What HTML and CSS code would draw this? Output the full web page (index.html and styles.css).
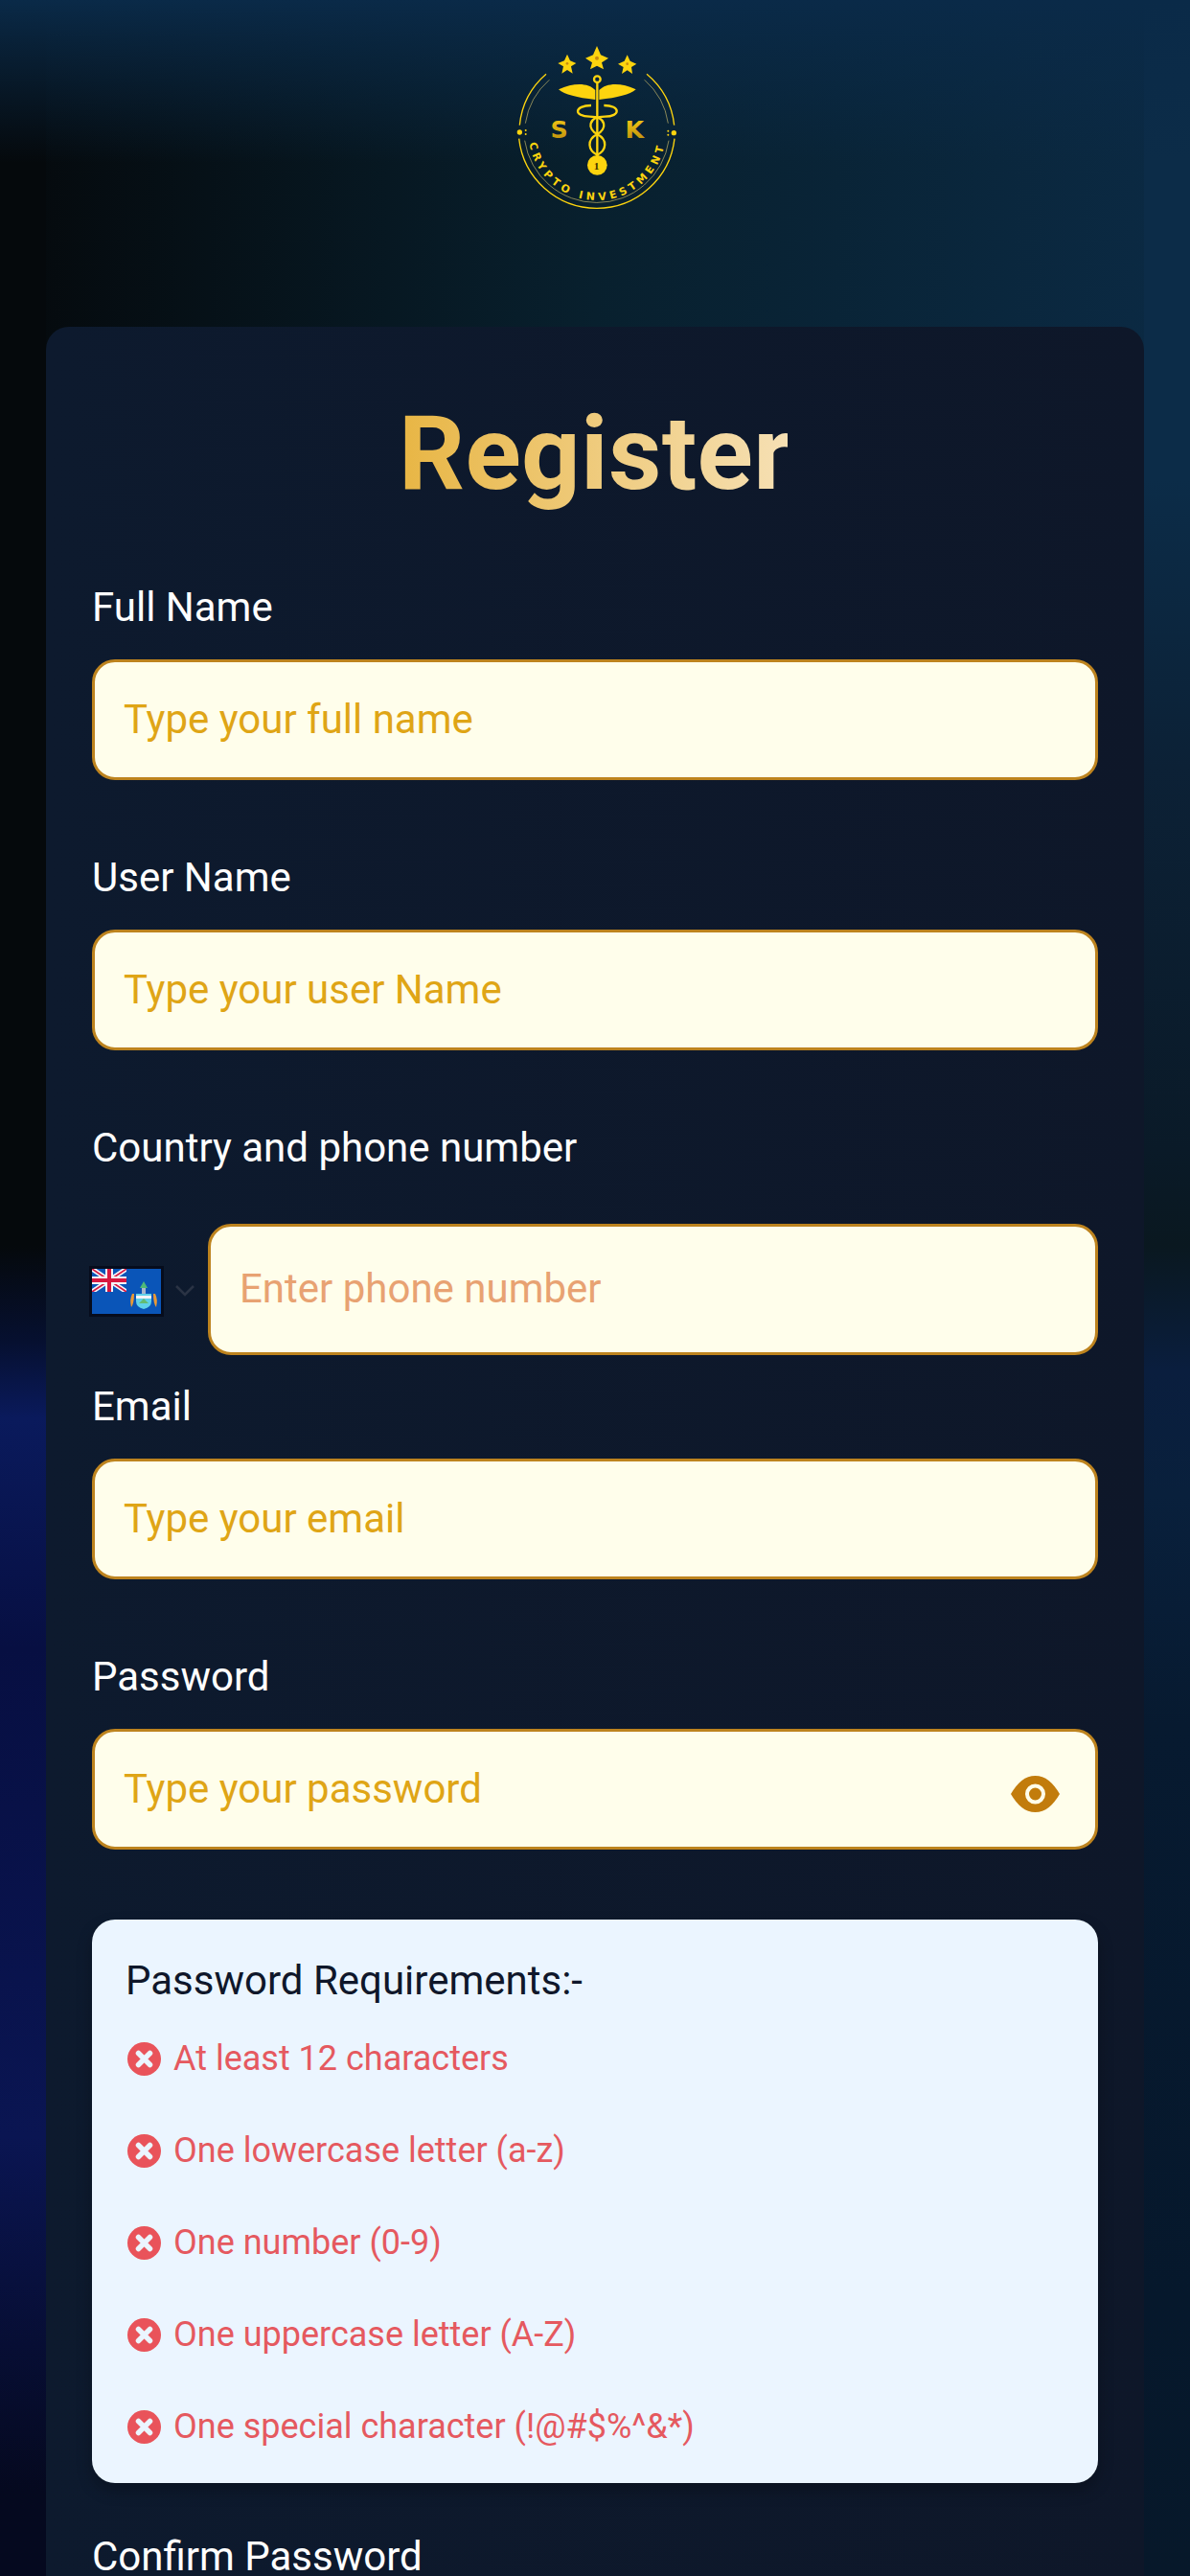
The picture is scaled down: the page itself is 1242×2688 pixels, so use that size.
FILE: index.html

```html
<!DOCTYPE html>
<html lang="en">
<head>
  <meta charset="UTF-8">
  <meta name="viewport" content="width=device-width, initial-scale=1.0">
  <title>Register</title>
  <link rel="stylesheet" href="styles.css">
</head>
<body>
  <div class="page">
    <div class="header">
      <svg class="logo" viewBox="0 0 720 660">
        <defs>
          <path id="logoArc" d="M148 352 A215 215 0 0 0 578 352"/>
          <linearGradient id="logoLetter" x1="0" y1="0" x2="0" y2="1">
            <stop offset="0" stop-color="#fbd016"/>
            <stop offset="1" stop-color="#b98a0c"/>
          </linearGradient>
        </defs>
        <g fill="#fdd40e">
          <polygon points="363,84 375,112 399,122 378,136 384,157 363,146 342,157 348,136 327,122 351,112"/>
          <polygon points="270,110 279,130 298,138 282,148 287,170 270,159 253,170 258,148 241,138 261,130"/>
          <polygon points="458,112 467,131 487,140 471,150 474,171 458,160 441,171 446,150 429,140 449,131"/>
        </g>
        <g fill="#c98a10">
          <circle cx="363" cy="122" r="6"/>
          <circle cx="270" cy="139" r="4"/>
          <circle cx="458" cy="140" r="4"/>
        </g>
        <g fill="none" stroke="#fdd40e" stroke-width="4">
          <path d="M121 332 A243 243 0 0 1 204 172"/>
          <path d="M519 172 A243 243 0 0 1 605 332"/>
          <path d="M119 374 A245 245 0 0 0 606 374"/>
        </g>
        <g fill="none" stroke="#c9b96a" stroke-width="2">
          <path d="M139 326 A225 225 0 0 1 214 190"/>
          <path d="M512 190 A225 225 0 0 1 586 326"/>
          <path d="M137 380 A228 228 0 0 0 588 380"/>
        </g>
        <g fill="#fdd40e">
          <circle cx="121" cy="354" r="8"/>
          <circle cx="140" cy="348" r="3"/>
          <circle cx="140" cy="360" r="3"/>
          <circle cx="604" cy="356" r="8"/>
          <circle cx="586" cy="350" r="3"/>
          <circle cx="586" cy="362" r="3"/>
          <path d="M358 222 C335 198 290 198 243 220 C262 236 300 246 358 252 Z"/>
          <path d="M370 222 C393 198 440 198 485 220 C466 236 428 246 370 252 Z"/>
          <circle cx="364" cy="457" r="31"/>
        </g>
        <g fill="none" stroke="#fdd40e" stroke-width="7">
          <circle cx="364" cy="188" r="10"/>
          <path d="M364 198 V430"/>
          <path d="M345 270 C290 270 290 305 340 305 C395 305 395 345 364 360 C330 378 335 410 364 425 C393 410 398 378 364 360 C333 345 333 305 388 305 C438 305 438 270 385 270"/>
        </g>
        <text class="logo-letter" x="245" y="371">S</text>
        <text class="logo-letter" x="481" y="371">K</text>
        <text class="logo-coin" x="362" y="470">1</text>
        <text class="logo-ring">
          <textPath href="#logoArc" startOffset="50%" text-anchor="middle">CRYPTO INVESTMENT</textPath>
        </text>
      </svg>
    </div>

    <form class="card">
      <h1 class="title">Register</h1>

      <div class="field">
        <label class="label">Full Name</label>
        <input class="input" type="text" placeholder="Type your full name">
      </div>

      <div class="field">
        <label class="label">User Name</label>
        <input class="input" type="text" placeholder="Type your user Name">
      </div>

      <div class="field field-phone">
        <label class="label">Country and phone number</label>
        <div class="phone-row">
          <div class="country">
            <svg class="flag" viewBox="0 0 72 47">
              <rect width="72" height="47" fill="#0a55b8"/>
              <path d="M0 0 L36 24 M36 0 L0 24" stroke="#f4f4f8" stroke-width="5"/>
              <path d="M0 0 L36 24 M36 0 L0 24" stroke="#d8173f" stroke-width="1.600"/>
              <rect y="24" width="36" height="3" fill="#0a55b8"/>
              <rect x="36" width="3" height="24" fill="#0a55b8"/>
              <rect x="14" width="8" height="24" fill="#f4f4f8"/>
              <rect y="8" width="36" height="8" fill="#f4f4f8"/>
              <rect x="16" width="4" height="24" fill="#d8173f"/>
              <rect y="10" width="36" height="4" fill="#d8173f"/>
              <path d="M54 13 L58 20 H50 Z" fill="#4fb878"/>
              <rect x="52" y="20" width="4" height="6" fill="#a9b6cc"/>
              <path d="M46 26 H62 V34 Q62 40 54 42 Q46 40 46 34 Z" fill="#5fd0ea"/>
              <path d="M46 28 H62 V31 H46 Z" fill="#f4f4f8"/>
              <path d="M49 36 L54 31 L59 36 Z" fill="#63bb72"/>
              <path d="M42 26 Q39 32 41 40 Q44 36 44 26 Z" fill="#eb9a34"/>
              <path d="M66 26 Q69 32 67 40 Q64 36 64 26 Z" fill="#eb9a34"/>
            </svg>
            <svg class="chevron" viewBox="0 0 20 12">
              <path d="M1 1 L10 10 L19 1" fill="none" stroke="#2a3344" stroke-width="2.6"/>
            </svg>
          </div>
          <input class="input input-phone" type="tel" placeholder="Enter phone number">
        </div>
      </div>

      <div class="field">
        <label class="label">Email</label>
        <input class="input" type="email" placeholder="Type your email">
      </div>

      <div class="field">
        <label class="label">Password</label>
        <div class="password-wrap">
          <input class="input" type="password" placeholder="Type your password">
          <svg class="eye" viewBox="0 0 51 38">
            <path d="M0 19 C7 7 15 0 25.500 0 C36 0 44 7 51 19 C44 31 36 38 25.500 38 C15 38 7 31 0 19 Z" fill="#c27c0c"/>
            <circle cx="25.500" cy="19" r="8.500" fill="none" stroke="#fffeeb" stroke-width="4"/>
          </svg>
        </div>
      </div>

      <div class="requirements">
        <p class="req-title">Password Requirements:-</p>
        <ul class="req-list">
          <li class="req-item"><svg class="req-icon" viewBox="0 0 35 35"><circle cx="17.500" cy="17.500" r="17.500"/><path d="M11.500 11.500 L23.500 23.500 M23.500 11.500 L11.500 23.500"/></svg>At least 12 characters</li>
          <li class="req-item"><svg class="req-icon" viewBox="0 0 35 35"><circle cx="17.500" cy="17.500" r="17.500"/><path d="M11.500 11.500 L23.500 23.500 M23.500 11.500 L11.500 23.500"/></svg>One lowercase letter (a-z)</li>
          <li class="req-item"><svg class="req-icon" viewBox="0 0 35 35"><circle cx="17.500" cy="17.500" r="17.500"/><path d="M11.500 11.500 L23.500 23.500 M23.500 11.500 L11.500 23.500"/></svg>One number (0-9)</li>
          <li class="req-item"><svg class="req-icon" viewBox="0 0 35 35"><circle cx="17.500" cy="17.500" r="17.500"/><path d="M11.500 11.500 L23.500 23.500 M23.500 11.500 L11.500 23.500"/></svg>One uppercase letter (A-Z)</li>
          <li class="req-item"><svg class="req-icon" viewBox="0 0 35 35"><circle cx="17.500" cy="17.500" r="17.500"/><path d="M11.500 11.500 L23.500 23.500 M23.500 11.500 L11.500 23.500"/></svg>One special character (!@#$%^&amp;*)</li>
        </ul>
      </div>

      <div class="field field-confirm">
        <label class="label">Confirm Password</label>
      </div>
    </form>
  </div>
</body>
</html>
```

FILE: styles.css

```css
* {
  box-sizing: border-box;
}
html, body {
  margin: 0;
  padding: 0;
  height: 2688px;
  overflow: hidden;
}
body {
  font-family: Roboto, "Liberation Sans", sans-serif;
  color: white;
  background: #050d18;
}
.page {
  height: 2688px;
  overflow: hidden;
  display: flex;
  flex-direction: column;
  background:
    linear-gradient(to bottom, #0a2a48 0, rgba(10, 42, 72, 0.75) 40px, rgba(10, 42, 72, 0) 170px),
    linear-gradient(to bottom, #05090c 0, #05090c 1300px, #061030 1400px, #0a1a5c 1480px, #070f42 1720px, #0a1552 2230px, #05091f 2600px) left top / 48px 100% no-repeat,
    linear-gradient(to bottom, #0c2c48 0, #0c2c48 500px, #0c2136 800px, #0a1a28 1200px, #0a1820 1300px, #0a1e3e 1430px, #09203c 1560px, #071a30 1800px, #06182c 2400px, #07182a 2688px) right top / 48px 100% no-repeat,
    linear-gradient(to right, #05090c 0, #08202e 50%, #0b2a44 100%) top / 100% 400px no-repeat;
}
.header {
  height: 341px;
  flex-shrink: 0;
  display: flex;
  justify-content: center;
  padding-top: 20px;
}
.logo {
  width: 240px;
  height: 220px;
  margin-left: 1px;
}
.logo-letter {
  font: 700 76px "DejaVu Sans", sans-serif;
  fill: url(#logoLetter);
  text-anchor: middle;
}
.logo-coin {
  font: 700 34px "Liberation Serif", serif;
  fill: #3a3000;
  text-anchor: middle;
}
.logo-ring {
  font: 700 33px "DejaVu Sans", sans-serif;
  fill: #fdd40e;
  letter-spacing: 12px;
}
.card {
  flex: 1;
  margin: 0 48px;
  padding: 67px 48px 0;
  background: linear-gradient(90deg, #0d1a2e, #0e1729);
  border-radius: 24px 24px 0 0;
}
.title {
  margin: 0 0 71px;
  font-size: 108px;
  line-height: 130px;
  font-weight: 700;
  letter-spacing: 0.3px;
  text-align: center;
  background: linear-gradient(90deg, #e8b645, #f6e0b4);
  background-size: 402px 100%;
  background-position: center;
  background-repeat: no-repeat;
  -webkit-background-clip: text;
  background-clip: text;
  color: transparent;
}
.field {
  margin-bottom: 77px;
}
.label {
  display: block;
  font-size: 42px;
  line-height: 50px;
  margin-bottom: 29px;
}
.input {
  display: block;
  width: 100%;
  height: 126px;
  padding: 0 30px 2px;
  background: #fffeeb;
  border: 3px solid #bd831e;
  border-radius: 24px;
  font-family: inherit;
  font-size: 42px;
  color: #333;
  outline: none;
}
.input::placeholder {
  color: #dfa516;
  opacity: 1;
}
.field-phone {
  margin-bottom: 29px;
}
.field-phone .label {
  margin-bottom: 54px;
}
.phone-row {
  display: flex;
  align-items: center;
}
.country {
  width: 121px;
  flex-shrink: 0;
  display: flex;
  align-items: center;
  padding-top: 3px;
}
.flag {
  width: 72px;
  height: 47px;
  outline: 3px solid #060c1c;
  display: block;
}
.chevron {
  width: 20px;
  height: 12px;
  margin-left: 15px;
}
.input-phone {
  height: 137px;
  flex: 1;
  width: auto;
}
.input-phone::placeholder {
  color: #e8a272;
}
.password-wrap {
  position: relative;
}
.eye {
  position: absolute;
  right: 40px;
  top: 49px;
  width: 51px;
  height: 38px;
}
.requirements {
  margin-top: -4px;
  padding: 39px 37px 34px;
  background: #ebf5ff;
  border-radius: 24px;
  box-shadow: 0 8px 16px rgba(0, 0, 0, 0.25);
}
.req-title {
  margin: 0 0 31px -2px;
  font-size: 42px;
  line-height: 50px;
  color: #0f172a;
}
.req-list {
  margin: 0;
  padding: 0;
  list-style: none;
  display: grid;
  gap: 46px;
}
.req-item {
  display: flex;
  align-items: center;
  gap: 13px;
  font-size: 36px;
  line-height: 50px;
  color: #e5595f;
}
.req-icon {
  width: 35px;
  height: 35px;
  flex-shrink: 0;
  fill: #e9535a;
}
.req-icon path {
  fill: none;
  stroke: #ebf5ff;
  stroke-width: 5.500;
  stroke-linecap: round;
}
.field-confirm {
  margin-top: 52px;
}
```
